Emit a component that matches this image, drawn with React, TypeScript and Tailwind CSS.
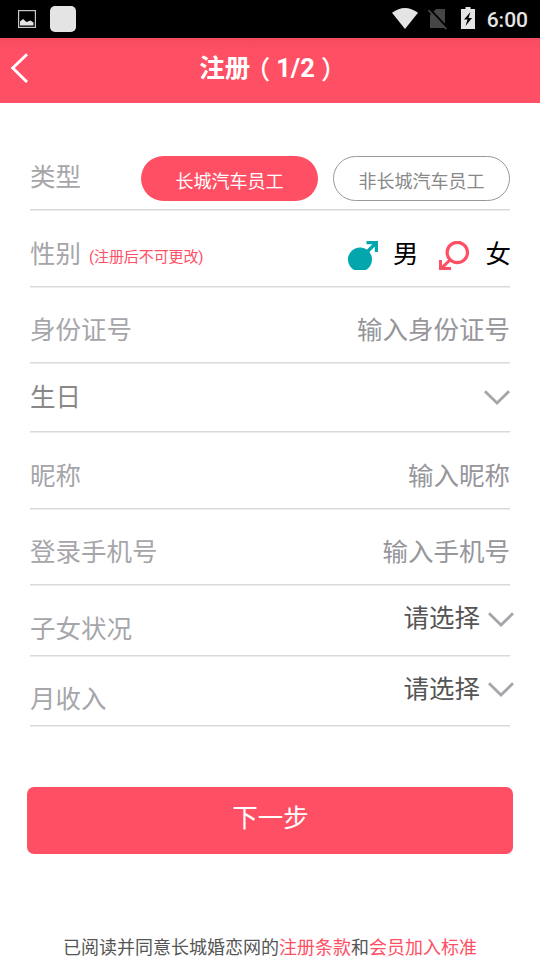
import React from "react";

interface RowProps {
  label: string;
  className: string;
  labelClass?: string;
  children?: React.ReactNode;
}

const Row = ({ label, className, labelClass = "text-[#a6a6aa]", children }: RowProps) => (
  <div
    className={`flex items-start justify-between border-b border-[#d9d9d9] shadow-[0_1px_0_#ececec] ${className}`}
  >
    <span className={labelClass}>{label}</span>
    {children}
  </div>
);

const Chevron = ({ className = "" }: { className?: string }) => (
  <svg className={className} width="26" height="16" viewBox="0 0 26 16" fill="none">
    <path d="M1 1.3L13 13L25 1.3" stroke="#a5a5aa" strokeWidth="2.8" />
  </svg>
);

const StatusBar = () => (
  <div className="flex h-[38px] items-center justify-between bg-black pl-[18px] pr-3 text-[#e4e4e4]">
    <div className="flex items-center gap-[14px]">
      <svg width="18" height="18" viewBox="0 0 18 18">
        <rect x="0.6" y="0.6" width="16.8" height="16.8" fill="none" stroke="#c8c8c8" strokeWidth="1.2" />
        <path d="M2 15.5V11.5L5 9L8.5 12L10 11.5L12.5 10.5L15.5 12.5V15.5Z" fill="#e4e4e4" />
      </svg>
      <div className="h-[26px] w-[26px] rounded-[5px] bg-[#e4e4e4]" />
    </div>
    <div className="flex items-center">
      <svg className="-mt-[2px]" width="26" height="21" viewBox="0 0 26 21">
        <path d="M0 4.8Q13 -4.6 26 4.8L13 21Z" fill="#e4e4e4" />
      </svg>
      <svg className="ml-[10px]" width="19" height="21" viewBox="0 0 19 21">
        <path d="M8 0H17V19H2V6Z" fill="#464646" />
        <path d="M1.5 -0.2L19.5 18.8" stroke="#000" strokeWidth="2" />
        <path d="M0.4 1.2L18.4 20.2" stroke="#464646" strokeWidth="1.7" />
      </svg>
      <svg className="-mt-[2px] ml-[14px]" width="14" height="22" viewBox="0 0 14 22">
        <path d="M4.5 0H9.5V2H14V22H0V2H4.5Z" fill="#e4e4e4" />
        <path d="M9.5 5L3 12.5H6.5L4.5 19L11 11H7.5Z" fill="#000" />
      </svg>
      <span className="ml-3 pt-[2px] font-[Roboto] text-[21px] font-medium leading-[38px]">6:00</span>
    </div>
  </div>
);

const Header = () => (
  <div className="grid h-[65px] grid-cols-[60px_1fr_60px] bg-linear-to-b from-[#f44b60] to-[#ff4f64] to-20% text-white">
    <svg className="ml-[10px] mt-[15px]" width="20" height="30" viewBox="0 0 20 30" fill="none">
      <path d="M17 1.2L2.8 15L17 29" stroke="currentColor" strokeWidth="2.9" />
    </svg>
    <h1 className="flex justify-center pt-[11px] text-[25.5px] font-bold leading-[38px]">
      注册
      <span className="ml-[7px] mr-[6px] mt-[2px] font-medium [font-feature-settings:'halt']">（</span>
      1/2
      <span className="ml-[6px] mr-[7px] mt-[2px] font-medium [font-feature-settings:'halt']">）</span>
    </h1>
  </div>
);

const MaleIcon = () => (
  <svg width="31" height="29" viewBox="0 0 31 29">
    <circle cx="12" cy="18.4" r="12" fill="#03a6ad" />
    <path d="M18 12L27.5 2.5M18.5 1.6H28.4V11" fill="none" stroke="#03a6ad" strokeWidth="3.2" />
  </svg>
);

const FemaleIcon = () => (
  <svg width="31" height="29" viewBox="0 0 31 29" fill="none" stroke="#ff4f64">
    <circle cx="18.3" cy="11.5" r="10.2" strokeWidth="3.2" />
    <path d="M11 19L2.5 27.2M1.5 19V27.5H12" strokeWidth="3" />
  </svg>
);

const App = () => {
  return (
    <div className="h-[960px] w-[540px] overflow-hidden bg-white font-[Roboto,'Noto_Sans_CJK_SC',sans-serif] text-[25.5px] leading-[40px]">
      <StatusBar />
      <Header />

      <div className="mx-[30px] pt-[30px]">
        <Row label="类型" className="h-[77px] pt-[24px]">
          <div className="-mt-[1px] flex gap-[15px] text-[18px] leading-[51px]">
            <div className="h-[45px] w-[177px] rounded-full bg-[#ff4f64] text-center text-white">长城汽车员工</div>
            <div className="h-[45px] w-[177px] rounded-full border-[1.5px] border-[#999] text-center leading-[49px] text-[#888]">
              非长城汽车员工
            </div>
          </div>
        </Row>
        <div className="flex h-[77px] items-start border-b border-[#d9d9d9] pt-[24px] shadow-[0_1px_0_#ececec]">
          <span className="text-[#a6a6aa]">性别</span>
          <span className="ml-2 mt-[3px] text-[15px] tracking-[-0.1px] text-[#ff4f64]">(注册后不可更改)</span>
          <div className="ml-auto flex items-start text-black">
            <div className="mt-[7px]">
              <MaleIcon />
            </div>
            <span className="ml-[14px]">男</span>
            <div className="ml-[21px] mt-[7px]">
              <FemaleIcon />
            </div>
            <span className="-mr-px ml-[15px]">女</span>
          </div>
        </div>
        <Row label="身份证号" className="h-[76px] pt-[23px]">
          <span className="text-[#96969b]">输入身份证号</span>
        </Row>
        <Row label="生日" className="h-[69px] pt-[14px]" labelClass="text-[#888]">
          <Chevron className="mt-[13px]" />
        </Row>
        <Row label="昵称" className="h-[77px] pt-[24px]">
          <span className="text-[#96969b]">输入昵称</span>
        </Row>
        <Row label="登录手机号" className="h-[76px] pt-[23px]">
          <span className="text-[#96969b]">输入手机号</span>
        </Row>
        <Row label="子女状况" className="h-[71px] pt-[24px]">
          <div className="-mr-1 -mt-[11px] flex text-[#555]">
            请选择
            <Chevron className="ml-2 mt-[14px]" />
          </div>
        </Row>
        <Row label="月收入" className="h-[70px] pt-[23px]">
          <div className="-mr-1 -mt-[10px] flex text-[#555]">
            请选择
            <Chevron className="ml-2 mt-[13px]" />
          </div>
        </Row>
      </div>

      <button className="mx-[27px] mt-[60.5px] block h-[67.5px] w-[486px] rounded-[7px] bg-[#ff4f64] pb-1 pl-px text-center text-white">
        下一步
      </button>

      <p className="mt-[74px] text-center text-[18px] text-[#555]">
        已阅读并同意长城婚恋网的<span className="text-[#ff4f64]">注册条款</span>和
        <span className="text-[#ff4f64]">会员加入标准</span>
      </p>
    </div>
  );
};

export default App;
